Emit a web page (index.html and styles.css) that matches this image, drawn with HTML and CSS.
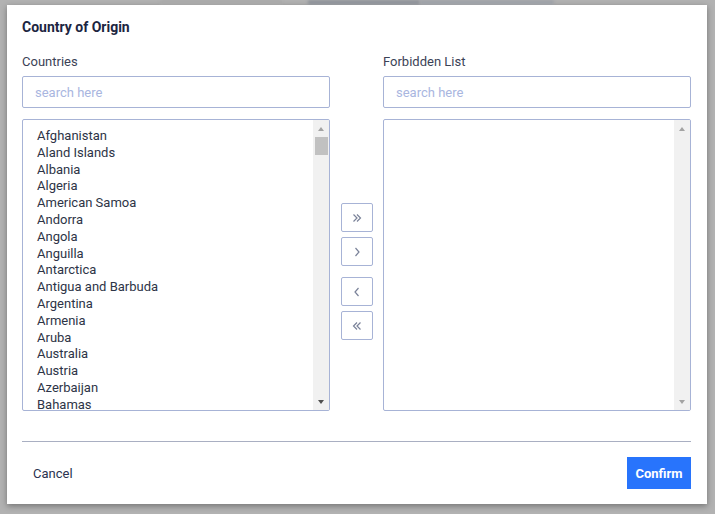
FILE: index.html
```html
<!DOCTYPE html>
<html lang="en">
<head>
<meta charset="utf-8">
<title>Country of Origin</title>
<link rel="stylesheet" href="styles.css">
</head>
<body>
<div class="behind">
  <span class="blur b1"></span>
  <span class="blur b2"></span>
  <span class="blur b3"></span>
</div>
<div class="modal">
  <h2 class="title">Country of Origin</h2>
  <div class="picker">
    <div class="col">
      <label class="label">Countries</label>
      <input class="search" type="text" placeholder="search here">
      <div class="listbox">
        <ul class="items">
          <li>Afghanistan</li>
          <li>Aland Islands</li>
          <li>Albania</li>
          <li>Algeria</li>
          <li>American Samoa</li>
          <li>Andorra</li>
          <li>Angola</li>
          <li>Anguilla</li>
          <li>Antarctica</li>
          <li>Antigua and Barbuda</li>
          <li>Argentina</li>
          <li>Armenia</li>
          <li>Aruba</li>
          <li>Australia</li>
          <li>Austria</li>
          <li>Azerbaijan</li>
          <li>Bahamas</li>
        </ul>
        <div class="scrollbar">
          <div class="sb-btn"><span class="tri up light"></span></div>
          <div class="sb-track"><div class="thumb"></div></div>
          <div class="sb-btn"><span class="tri down dark"></span></div>
        </div>
      </div>
    </div>
    <div class="moves">
      <button class="move" title="Add all">
        <svg viewBox="0 0 12 12" width="12" height="12"><polyline points="2.5,2.5 6,6 2.5,9.5"/><polyline points="6,2.5 9.5,6 6,9.5"/></svg>
      </button>
      <button class="move" title="Add">
        <svg viewBox="0 0 12 12" width="12" height="12"><polyline points="4.5,2 8,6 4.5,10"/></svg>
      </button>
      <button class="move gap" title="Remove">
        <svg viewBox="0 0 12 12" width="12" height="12"><polyline points="7.5,2 4,6 7.5,10"/></svg>
      </button>
      <button class="move" title="Remove all">
        <svg viewBox="0 0 12 12" width="12" height="12"><polyline points="6,2.5 2.5,6 6,9.5"/><polyline points="9.5,2.5 6,6 9.5,9.5"/></svg>
      </button>
    </div>
    <div class="col">
      <label class="label">Forbidden List</label>
      <input class="search" type="text" placeholder="search here">
      <div class="listbox">
        <ul class="items"></ul>
        <div class="scrollbar">
          <div class="sb-btn"><span class="tri up light"></span></div>
          <div class="sb-track"></div>
          <div class="sb-btn"><span class="tri down light"></span></div>
        </div>
      </div>
    </div>
  </div>
  <div class="footer">
    <button class="cancel">Cancel</button>
    <button class="confirm">Confirm</button>
  </div>
</div>
</body>
</html>
```

FILE: styles.css
```css
* { box-sizing: border-box; }

html, body {
  margin: 0;
  padding: 0;
}

body {
  width: 715px;
  height: 514px;
  overflow: hidden;
  background: #b2b2b2;
  font-family: Roboto, "Liberation Sans", Arial, sans-serif;
}

.behind {
  height: 5px;
  display: flex;
  align-items: flex-start;
  overflow: hidden;
}

.blur {
  display: block;
  height: 5px;
  filter: blur(1.5px);
}
.b1 { margin-left: 160px; width: 122px; background: #a9a9a9; }
.b2 { margin-left: 26px; width: 112px; background: #8f939a; }
.b3 { width: 134px; background: #9ea2a8; }

.modal {
  margin-left: 7px;
  width: 700px;
  height: 499px;
  background: #ffffff;
  padding: 12px 16px 15px 15px;
  box-shadow: 0 2px 6px rgba(0, 0, 0, 0.35);
}

.title {
  margin: 0;
  font-size: 14px;
  line-height: 20px;
  font-weight: 700;
  color: #1c2541;
}

.picker {
  margin-top: 16px;
  display: flex;
}

.col {
  width: 308px;
  display: flex;
  flex-direction: column;
}

.label {
  font-size: 13px;
  line-height: 16px;
  color: #3b4256;
  padding-top: 1px;
  margin-bottom: 6px;
}

.search {
  height: 32px;
  width: 100%;
  border: 1px solid #a7b3d6;
  border-radius: 2px;
  padding: 0 12px;
  font-family: inherit;
  font-size: 13px;
  color: #2d3446;
  outline: none;
  margin: 0 0 11px 0;
}
.search::placeholder { color: #a9b6df; }

.listbox {
  height: 292px;
  border: 1px solid #a7b3d6;
  border-radius: 2px;
  display: flex;
  overflow: hidden;
}

.items {
  flex: 1;
  list-style: none;
  margin: 0;
  padding: 8px 0 0 14px;
  overflow: hidden;
  font-size: 13px;
  line-height: 16.8px;
  color: #2d3446;
}

.scrollbar {
  width: 16px;
  background: #f1f1f1;
  display: flex;
  flex-direction: column;
}

.sb-btn {
  height: 17px;
  display: flex;
  align-items: center;
  justify-content: center;
}

.sb-track {
  flex: 1;
}

.thumb {
  height: 18px;
  margin: 0 1px 0 2px;
  background: #c1c1c1;
}

.tri {
  width: 0;
  height: 0;
  border-left: 3.5px solid transparent;
  border-right: 3.5px solid transparent;
}
.tri.up { border-bottom: 4px solid #a3a3a3; }
.tri.down { border-top: 4px solid #a3a3a3; }
.tri.down.dark { border-top-color: #505050; }

.moves {
  flex: 1;
  display: flex;
  flex-direction: column;
  align-items: center;
  padding-top: 150px;
  gap: 5px;
}

.move {
  width: 32px;
  height: 29px;
  padding: 0;
  border: 1px solid #a7b3d6;
  border-radius: 2px;
  background: #ffffff;
  display: flex;
  align-items: center;
  justify-content: center;
}
.move.gap { margin-top: 6px; }

.move svg polyline {
  fill: none;
  stroke: #7a8299;
  stroke-width: 1.2;
}

.footer {
  margin-top: 30px;
  border-top: 1px solid #a9afc2;
  padding-top: 15px;
  display: flex;
  justify-content: space-between;
  align-items: center;
}

.cancel {
  height: 32px;
  padding: 0 11px;
  border: none;
  background: transparent;
  font-family: inherit;
  font-size: 13px;
  color: #2b3350;
}

.confirm {
  height: 32px;
  width: 64px;
  padding: 0;
  border: none;
  background: #2874fc;
  color: #ffffff;
  font-family: inherit;
  font-size: 13px;
  font-weight: 700;
}
```
